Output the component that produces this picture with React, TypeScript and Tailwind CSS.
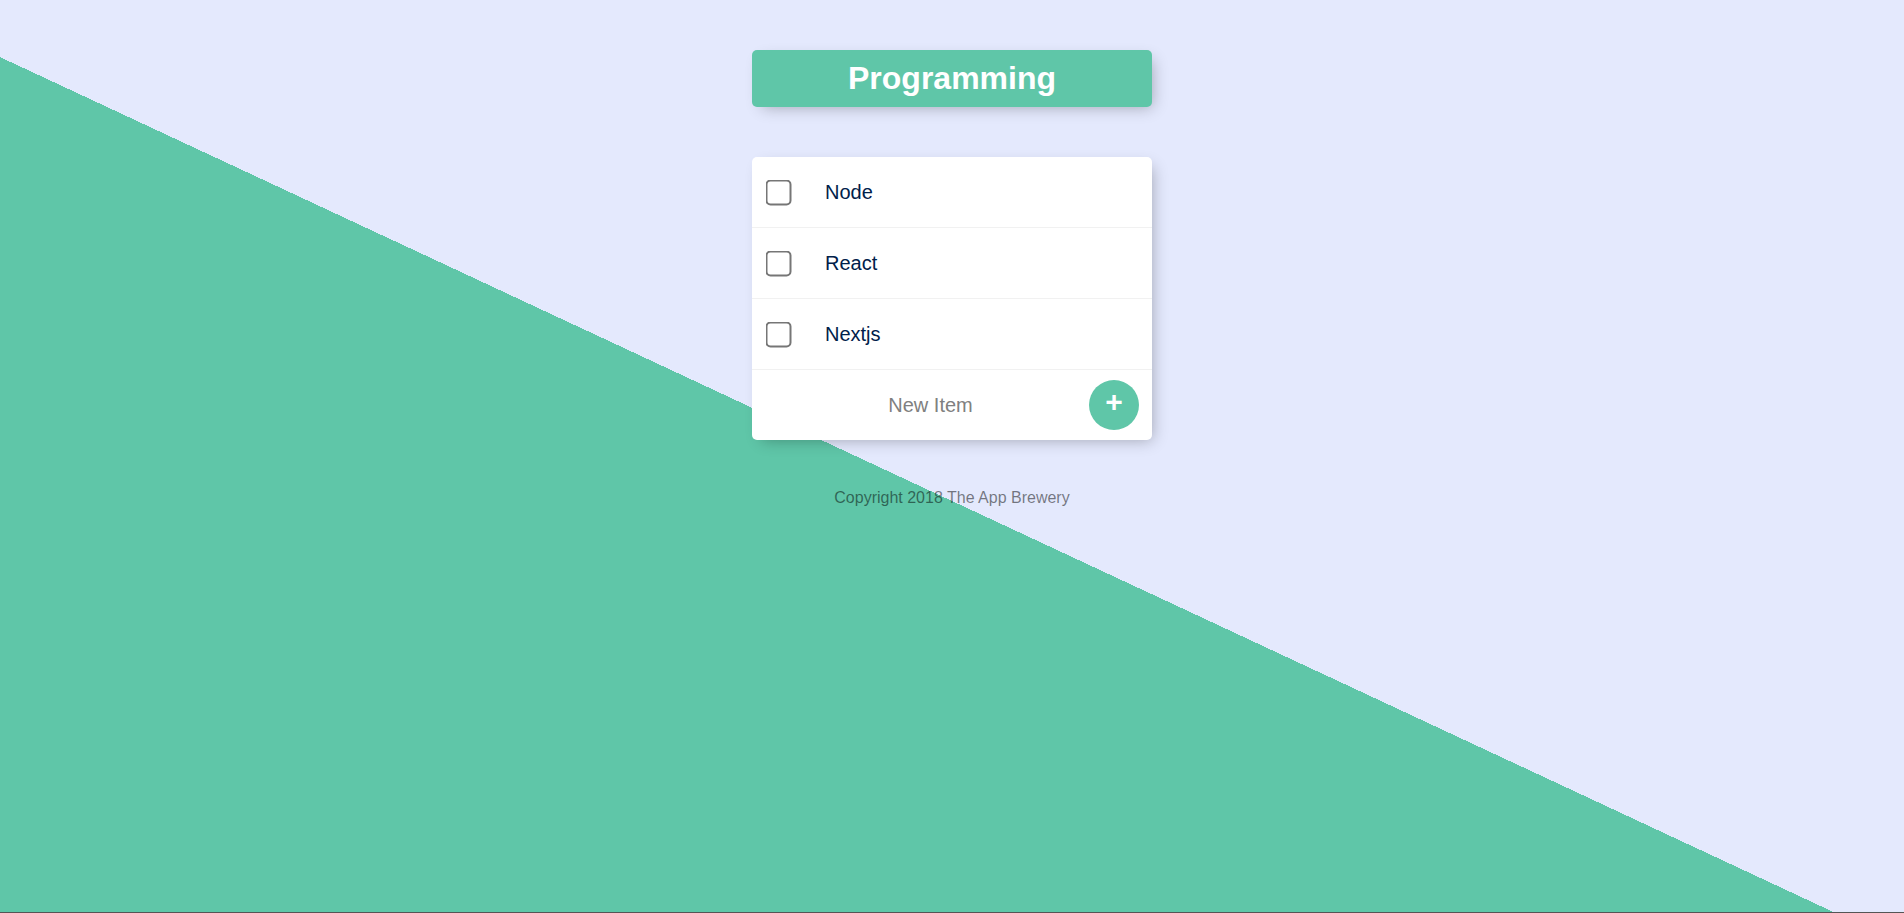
import { useState } from "react";

const items = ["Node", "React", "Nextjs"];

function Item({ label }: { label: string }) {
  const [done, setDone] = useState(false);
  return (
    <div className="flex min-h-[71px] items-center border-b border-[#f1f1f1]">
      <input
        type="checkbox"
        checked={done}
        onChange={() => setDone(!done)}
        className="m-5 h-[13px] w-[13px] scale-200"
      />
      <p
        className={
          "m-0 p-5 text-[20px] font-extralight leading-[normal] text-[#00204a] " +
          (done ? "line-through decoration-[#5fc6a8]" : "")
        }
      >
        {label}
      </p>
    </div>
  );
}

export default function App() {
  return (
    <div className="box-border h-[913px] overflow-hidden border-b border-[#555] bg-[#e4e9fd] bg-[linear-gradient(25deg,#5fc6a8_50%,#e4e9fd_50%)] bg-[length:100%_1002px] bg-no-repeat font-['Liberation_Sans',Arial,sans-serif]">
      <div className="flex flex-col">
        <div className="mx-auto mt-[50px] w-[400px] rounded-[5px] bg-[#5fc6a8] text-center shadow-[5px_5px_15px_-5px_rgba(0,0,0,0.3)]">
          <h1 className="p-[10px] text-[32px] font-bold leading-[normal] text-white">Programming</h1>
        </div>

        <div className="mx-auto mt-[50px] w-[400px] rounded-[5px] bg-white shadow-[5px_5px_15px_-5px_rgba(0,0,0,0.3)]">
          {items.map((item) => (
            <Item key={item} label={item} />
          ))}
          <div className="flex min-h-[70px] items-center">
            <form className="ml-5 flex items-center gap-[4px]" onSubmit={(e) => e.preventDefault()}>
              <input
                type="text"
                name="newItem"
                placeholder="New Item"
                autoComplete="off"
                className="h-[60px] w-[313px] border-none bg-transparent pl-[4px] text-center text-[20px] font-extralight text-[#00204a] outline-none placeholder:text-[grey] focus:shadow-[inset_0_-3px_0_0_#5fc6a8]"
              />
              <button
                type="submit"
                className="h-[50px] w-[50px] rounded-full border-0 bg-[#5fc6a8] pb-[6px] text-[30px] font-bold leading-none text-white"
              >
                +
              </button>
            </form>
          </div>
        </div>

        <footer className="mt-[49px] text-center text-[16px] leading-[normal] text-black/50">Copyright 2018 The App Brewery</footer>
      </div>
    </div>
  );
}
